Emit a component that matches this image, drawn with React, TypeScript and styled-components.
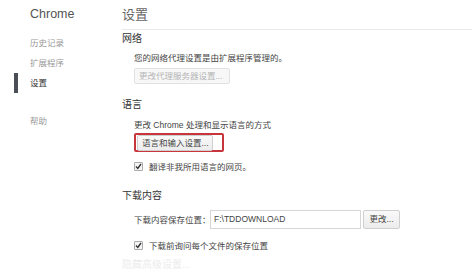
import React from "react";
import styled, { createGlobalStyle } from "styled-components";

const GlobalStyle = createGlobalStyle`
  html, body {
    margin: 0;
    padding: 0;
    background: #fff;
    overflow: hidden;
  }
  body {
    font-family: "Liberation Sans", "Noto Sans CJK SC", sans-serif;
    color: #333;
  }
`;

const Page = styled.div`
  display: flex;
  width: 472px;
  height: 269px;
  overflow: hidden;
`;

const Sidebar = styled.nav`
  width: 122px;
  flex-shrink: 0;
  display: flex;
  flex-direction: column;
`;

const Brand = styled.div`
  padding-left: 30px;
  height: 28px;
  line-height: 28px;
  font-size: 12.5px;
  color: #555;
`;

const NavList = styled.div`
  display: flex;
  flex-direction: column;
  margin-top: 5px;
`;

const NavItem = styled.div<{ $active?: boolean; $gap?: number }>`
  position: relative;
  height: 20px;
  line-height: 20px;
  padding-left: 30px;
  margin-top: ${(p) => p.$gap ?? 0}px;
  font-size: 8.5px;
  color: ${(p) => (p.$active ? "#333" : "#999")};

  &::before {
    content: "";
    display: ${(p) => (p.$active ? "block" : "none")};
    position: absolute;
    left: 14px;
    top: 0;
    width: 4px;
    height: 20px;
    background: #4b4f55;
  }
`;

const Main = styled.main`
  flex: 1;
  display: flex;
  flex-direction: column;
`;

const Title = styled.h1`
  margin: 0;
  height: 29px;
  line-height: 29px;
  font-size: 13px;
  font-weight: normal;
  color: #666;
  border-bottom: 1px solid #e9e9e9;
`;

const Section = styled.section<{ $top: number }>`
  margin-top: ${(p) => p.$top}px;
  display: flex;
  flex-direction: column;
`;

const Heading = styled.h2`
  margin: 0;
  height: 16px;
  line-height: 16px;
  font-size: 10px;
  font-weight: normal;
  color: #333;
`;

const Body = styled.div`
  padding-left: 12px;
  display: flex;
  flex-direction: column;
  align-items: flex-start;
`;

const Text = styled.div<{ $top?: number }>`
  margin-top: ${(p) => p.$top ?? 0}px;
  height: 16px;
  line-height: 16px;
  font-size: 8.5px;
  color: #444;
  white-space: nowrap;
`;

const Button = styled.button<{ $disabled?: boolean; $w: number }>`
  box-sizing: border-box;
  width: ${(p) => p.$w}px;
  height: 16px;
  padding: 0 4px;
  text-align: left;
  white-space: nowrap;
  overflow: hidden;
  font-family: inherit;
  font-size: 8.5px;
  line-height: 14px;
  color: ${(p) => (p.$disabled ? "#b5b5b5" : "#444")};
  background: ${(p) => (p.$disabled ? "#f7f7f7" : "linear-gradient(#f9f9f9, #ececec)")};
  border: 1px solid ${(p) => (p.$disabled ? "#e2e2e2" : "#cfcfcf")};
  border-radius: 2px;
`;

const ProxyButton = styled(Button)`
  margin-top: 2px;
`;

const Highlight = styled.div`
  box-sizing: border-box;
  width: 90px;
  height: 19px;
  padding: 0 9px 0 1px;
  display: flex;
  align-items: center;
  border: 2px solid #c8353b;
  border-radius: 2px;
`;

const CheckRow = styled.label<{ $top: number }>`
  margin-top: ${(p) => p.$top}px;
  height: 14px;
  display: flex;
  align-items: center;
  gap: 6px;
  font-size: 8.5px;
  color: #444;
  white-space: nowrap;
`;

const Box = styled.span`
  box-sizing: border-box;
  width: 9px;
  height: 9px;
  border: 1px solid #aaa;
  border-radius: 1px;
  background: #f4f4f4;
  display: flex;
  align-items: center;
  justify-content: center;
`;

const PathRow = styled.div`
  margin-top: 5px;
  display: flex;
  align-items: center;
  height: 20px;
`;

const PathLabel = styled.span`
  width: 76px;
  font-size: 8.5px;
  color: #444;
  white-space: nowrap;
`;

const PathInput = styled.div`
  box-sizing: border-box;
  width: 151px;
  height: 19px;
  line-height: 17px;
  padding-left: 3px;
  border: 1px solid #d6d6d6;
  font-size: 8.5px;
  color: #444;
`;

const ChangeButton = styled(Button)`
  margin-left: 2px;
  height: 19px;
  line-height: 17px;
  text-align: center;
  padding: 0;
`;

const Faded = styled.div`
  margin-top: 7px;
  height: 12px;
  line-height: 12px;
  font-size: 10px;
  color: #ececec;
`;

const Check = () => (
  <Box>
    <svg width="7" height="7" viewBox="0 0 7 7">
      <path d="M1 3.6 L2.8 5.4 L6 1" fill="none" stroke="#333" strokeWidth="1.4" />
    </svg>
  </Box>
);

export default function App() {
  return (
    <Page>
      <GlobalStyle />
      <Sidebar>
        <Brand>Chrome</Brand>
        <NavList>
          <NavItem>历史记录</NavItem>
          <NavItem>扩展程序</NavItem>
          <NavItem $active>设置</NavItem>
          <NavItem $gap={18}>帮助</NavItem>
        </NavList>
      </Sidebar>
      <Main>
        <Title>设置</Title>
        <Section $top={1}>
          <Heading>网络</Heading>
          <Body>
            <Text $top={3}>您的网络代理设置是由扩展程序管理的。</Text>
            <ProxyButton $disabled $w={96}>
              更改代理服务器设置...
            </ProxyButton>
          </Body>
        </Section>
        <Section $top={13}>
          <Heading>语言</Heading>
          <Body>
            <Text $top={4}>更改 Chrome 处理和显示语言的方式</Text>
            <Highlight>
              <Button $w={76}>语言和输入设置...</Button>
            </Highlight>
            <CheckRow $top={7}>
              <Check />
              翻译非我所用语言的网页。
            </CheckRow>
          </Body>
        </Section>
        <Section $top={15}>
          <Heading>下载内容</Heading>
          <Body>
            <PathRow>
              <PathLabel>下载内容保存位置：</PathLabel>
              <PathInput>F:\TDDOWNLOAD</PathInput>
              <ChangeButton $w={37}>更改...</ChangeButton>
            </PathRow>
            <CheckRow $top={9}>
              <Check />
              下载前询问每个文件的保存位置
            </CheckRow>
          </Body>
        </Section>
        <Faded>隐藏高级设置...</Faded>
      </Main>
    </Page>
  );
}
